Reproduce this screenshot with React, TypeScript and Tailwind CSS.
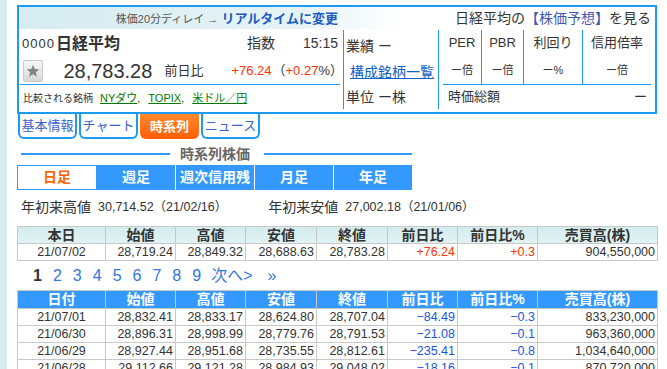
import React from "react";

const daily = [
  ["21/07/01", "28,832.41", "28,833.17", "28,624.80", "28,707.04", "−84.49", "−0.3", "833,230,000"],
  ["21/06/30", "28,896.31", "28,998.99", "28,779.76", "28,791.53", "−21.08", "−0.1", "963,360,000"],
  ["21/06/29", "28,927.44", "28,951.68", "28,735.55", "28,812.61", "−235.41", "−0.8", "1,034,640,000"],
  ["21/06/28", "29,112.66", "29,121.28", "28,984.93", "29,048.02", "−18.16", "−0.1", "870,720,000"],
];

const heads = ["始値", "高値", "安値", "終値", "前日比", "前日比%", "売買高(株)"];

function Cols() {
  return (
    <colgroup>
      <col className="w-[88px]" />
      <col className="w-[70px]" />
      <col className="w-[70px]" />
      <col className="w-[71px]" />
      <col className="w-[71px]" />
      <col className="w-[70px]" />
      <col className="w-[80px]" />
      <col className="w-[120px]" />
    </colgroup>
  );
}

export default function App() {
  return (
    <div className="flex w-[667px] h-[369px] overflow-hidden bg-white font-['Liberation_Sans','Noto_Sans_CJK_JP',sans-serif] text-[#333]">
      <div className="w-[7px] shrink-0 bg-[#d7edf1]" />
      <div className="pl-[10px] pt-[5px]">
        {/* top box */}
        <div className="w-[640px] border-2 border-[#1b9cf2]">
          <div className="flex h-[22px] items-center bg-[linear-gradient(to_right,#d6ecf1_0px,#e6f3f6_280px,#ffffff_384px)]">
            <div className="w-[324px] pr-[5px] text-right leading-[22px] whitespace-nowrap">
              <span className="text-[11px] text-[#555]">株価20分ディレイ → </span>
              <span className="text-[13px] font-bold text-[#1d5cc0]">リアルタイムに変更</span>
            </div>
            <div className="flex-1 pr-[4px] text-right text-[14px] leading-[22px] whitespace-nowrap">
              日経平均の<span className="text-[#3f57b0]">【株価予想】</span>を見る
            </div>
          </div>
          <div className="flex h-[83px] pt-px pb-[3px]">
            {/* left */}
            <div className="w-[325px] border-r border-[#1b9cf2] flex flex-col">
              <div className="flex items-center h-[27px] pl-[3px] pr-[5px] whitespace-nowrap">
                <span className="text-[13px] tracking-[1px]">0000</span>
                <span className="ml-[1px] text-[16px] font-bold leading-none">日経平均</span>
                <span className="ml-auto text-[14px]">指数</span>
                <span className="ml-[28px] text-[14px]">15:15</span>
              </div>
              <div className="flex items-center h-[27px] pl-[4px] whitespace-nowrap">
                <div className="w-[21px] h-[22px] rounded-[2px] border border-[#c8c8c8] bg-gradient-to-b from-[#f6f6f6] to-[#d8d8d8] flex items-center justify-center">
                  <svg width="14" height="14" viewBox="0 0 24 24">
                    <path fill="#858585" d="M12 1.5l3.1 7.1 7.6.6-5.8 5 1.8 7.5L12 17.7l-6.7 4 1.8-7.5-5.8-5 7.6-.6z" />
                  </svg>
                </div>
                <span className="ml-[20px] text-[20px] leading-none">28,783.28</span>
                <span className="ml-[12px] text-[13px]">前日比</span>
                <span className="ml-[28px] text-[13px] text-[#ff3300]">+76.24</span>
                <span className="ml-[1px] text-[13px]">
                  （<span className="text-[#ff3300]">+0.27</span>%）
                </span>
              </div>
              <div className="ml-[1px] mr-[3px] h-px bg-[#1b9cf2]" />
              <div className="flex items-center flex-1 pl-[4px] pt-[2px] text-[11px] whitespace-nowrap">
                <span className="text-[10px]">比較される銘柄</span>
                <span className="ml-[7px] text-[#007a00] underline">NYダウ</span>
                <span>,</span>
                <span className="ml-[8px] text-[#007a00] underline">TOPIX</span>
                <span>,</span>
                <span className="ml-[8px] text-[#007a00] underline">米ドル／円</span>
              </div>
            </div>
            {/* middle */}
            <div className="w-[95px] border-r border-[#1b9cf2] flex flex-col pt-[3px] text-[14px] whitespace-nowrap">
              <div className="h-[26px] flex items-center pl-[2px]">業績 ー</div>
              <div className="h-[26px] flex items-center pl-[6px]">
                <span className="text-[#1062c8] underline">構成銘柄一覧</span>
              </div>
              <div className="h-[24px] flex items-center pl-[2px]">単位 ー株</div>
            </div>
            {/* right */}
            <div className="flex-1 px-[4px] flex flex-col whitespace-nowrap">
              <div className="flex h-[55px] border-b border-[#1b9cf2]">
                {[
                  ["PER", "ー", "倍", "w-[39px] border-r"],
                  ["PBR", "ー", "倍", "w-[42px] border-r"],
                  ["利回り", "ー", "%", "w-[59px] border-r"],
                  ["信用倍率", "ー", "倍", "flex-1"],
                ].map(([l, v, u, c]) => (
                  <div key={l} className={`${c} border-[#1b9cf2] flex flex-col items-center`}>
                    <div className="h-[26px] flex items-center text-[13px]">{l}</div>
                    <div className="h-[28px] flex items-center text-[11px]">
                      {v}
                      {u}
                    </div>
                  </div>
                ))}
              </div>
              <div className="flex-1 flex items-center justify-between pl-[5px] pr-[4px] text-[13px]">
                <span>時価総額</span>
                <span>ー</span>
              </div>
            </div>
          </div>
        </div>

        {/* tabs */}
        <div className="flex gap-[2px] ml-[1px]">
          {["基本情報", "チャート"].map((t) => (
            <div key={t} className="w-[59px] h-[25px] border-2 border-t-0 border-[#1b9cf2] rounded-b-[6px] flex items-center justify-center text-[13px] text-[#3b62cc]">
              {t}
            </div>
          ))}
          <div className="w-[59px] h-[25px] rounded-b-[6px] bg-gradient-to-b from-[#ff8a2a] to-[#ff5c00] flex items-center justify-center text-[13px] font-bold text-white">
            時系列
          </div>
          <div className="w-[59px] h-[25px] border-2 border-t-0 border-[#1b9cf2] rounded-b-[6px] flex items-center justify-center text-[13px] text-[#3b62cc]">
            ニュース
          </div>
        </div>

        {/* section title */}
        <div className="w-[395px] h-[16px] mt-[7px] flex items-center">
          <div className="ml-[4px] w-[149px] h-[2px] bg-[#3399ff]" />
          <div className="ml-[10px] w-[70px] text-[14px] font-bold text-[#666] leading-none whitespace-nowrap">時系列株価</div>
          <div className="ml-[14px] w-[148px] h-[2px] bg-[#3399ff]" />
        </div>

        {/* period bar */}
        <div className="w-[395px] h-[25px] mt-[3px] flex text-[14px] font-bold">
          <div className="w-[80px] border border-[#3399ff] bg-white text-[#ff6600] flex items-center justify-center">日足</div>
          <div className="w-[78px] bg-[#3399ff] text-white flex items-center justify-center">週足</div>
          <div className="w-[79px] bg-[#3399ff] border-l border-white text-white flex items-center justify-center whitespace-nowrap">週次信用残</div>
          <div className="w-[79px] bg-[#3399ff] border-l border-white text-white flex items-center justify-center">月足</div>
          <div className="w-[79px] bg-[#3399ff] border-l border-white text-white flex items-center justify-center">年足</div>
        </div>

        {/* high / low */}
        <div className="h-[34px] flex items-center pl-[4px] text-[14px] whitespace-nowrap">
          <span>年初来高値</span>
          <span className="ml-[7px] text-[12.5px]">30,714.52（21/02/16）</span>
          <span className="ml-[41px]">年初来安値</span>
          <span className="ml-[7px] text-[12.5px]">27,002.18（21/01/06）</span>
        </div>

        {/* table 1 */}
        <table className="mt-[2px] w-[640px] table-fixed border-collapse">
          <Cols />
          <thead>
            <tr className="bg-gradient-to-b from-[#d3ecee] to-[#e3f3f4]">
              {["本日", ...heads].map((h) => (
                <th key={h} className="border border-[#c8c8c8] h-[17px] p-0 text-[14px] font-bold leading-[15px] text-[#333] whitespace-nowrap">
                  {h}
                </th>
              ))}
            </tr>
          </thead>
          <tbody>
            <tr>
              <td className="border border-[#c8c8c8] h-[17px] p-0 text-center text-[12.5px] leading-[15px]">21/07/02</td>
              {["28,719.24", "28,849.32", "28,688.63", "28,783.28"].map((v, i) => (
                <td key={i} className="border border-[#c8c8c8] h-[17px] p-0 pr-[2px] text-right text-[12.5px] leading-[15px]">{v}</td>
              ))}
              <td className="border border-[#c8c8c8] h-[17px] p-0 pr-[2px] text-right text-[12.5px] leading-[15px] text-[#ff3300]">+76.24</td>
              <td className="border border-[#c8c8c8] h-[17px] p-0 pr-[2px] text-right text-[12.5px] leading-[15px] text-[#ff3300]">+0.3</td>
              <td className="border border-[#c8c8c8] h-[17px] p-0 pr-[2px] text-right text-[12.5px] leading-[15px]">904,550,000</td>
            </tr>
          </tbody>
        </table>

        {/* pagination */}
        <div className="h-[29px] flex items-center pl-[16px] text-[16px] whitespace-nowrap">
          <span className="font-bold text-[#333]">1</span>
          {["2", "3", "4", "5", "6", "7", "8", "9"].map((n) => (
            <span key={n} className="ml-[11px] text-[#3377dd]">{n}</span>
          ))}
          <span className="ml-[10px] text-[#3377dd]">次へ&gt;</span>
          <span className="ml-[15px] text-[#3377dd]">»</span>
        </div>

        {/* table 2 */}
        <table className="w-[640px] table-fixed border-collapse">
          <Cols />
          <thead>
            <tr className="bg-[#3399ff]">
              {["日付", ...heads].map((h) => (
                <th key={h} className="border border-[#c8c8c8] h-[18px] p-0 text-[14px] font-bold leading-[15px] text-white whitespace-nowrap">
                  {h}
                </th>
              ))}
            </tr>
          </thead>
          <tbody>
            {daily.map((r) => (
              <tr key={r[0]}>
                <td className="border border-[#c8c8c8] h-[17px] p-0 text-center text-[12.5px] leading-[15px]">{r[0]}</td>
                {r.slice(1, 5).map((v, i) => (
                  <td key={i} className="border border-[#c8c8c8] h-[17px] p-0 pr-[2px] text-right text-[12.5px] leading-[15px]">{v}</td>
                ))}
                <td className="border border-[#c8c8c8] h-[17px] p-0 pr-[2px] text-right text-[12.5px] leading-[15px] text-[#1a55e0]">{r[5]}</td>
                <td className="border border-[#c8c8c8] h-[17px] p-0 pr-[2px] text-right text-[12.5px] leading-[15px] text-[#1a55e0]">{r[6]}</td>
                <td className="border border-[#c8c8c8] h-[17px] p-0 pr-[2px] text-right text-[12.5px] leading-[15px]">{r[7]}</td>
              </tr>
            ))}
          </tbody>
        </table>
      </div>
    </div>
  );
}
